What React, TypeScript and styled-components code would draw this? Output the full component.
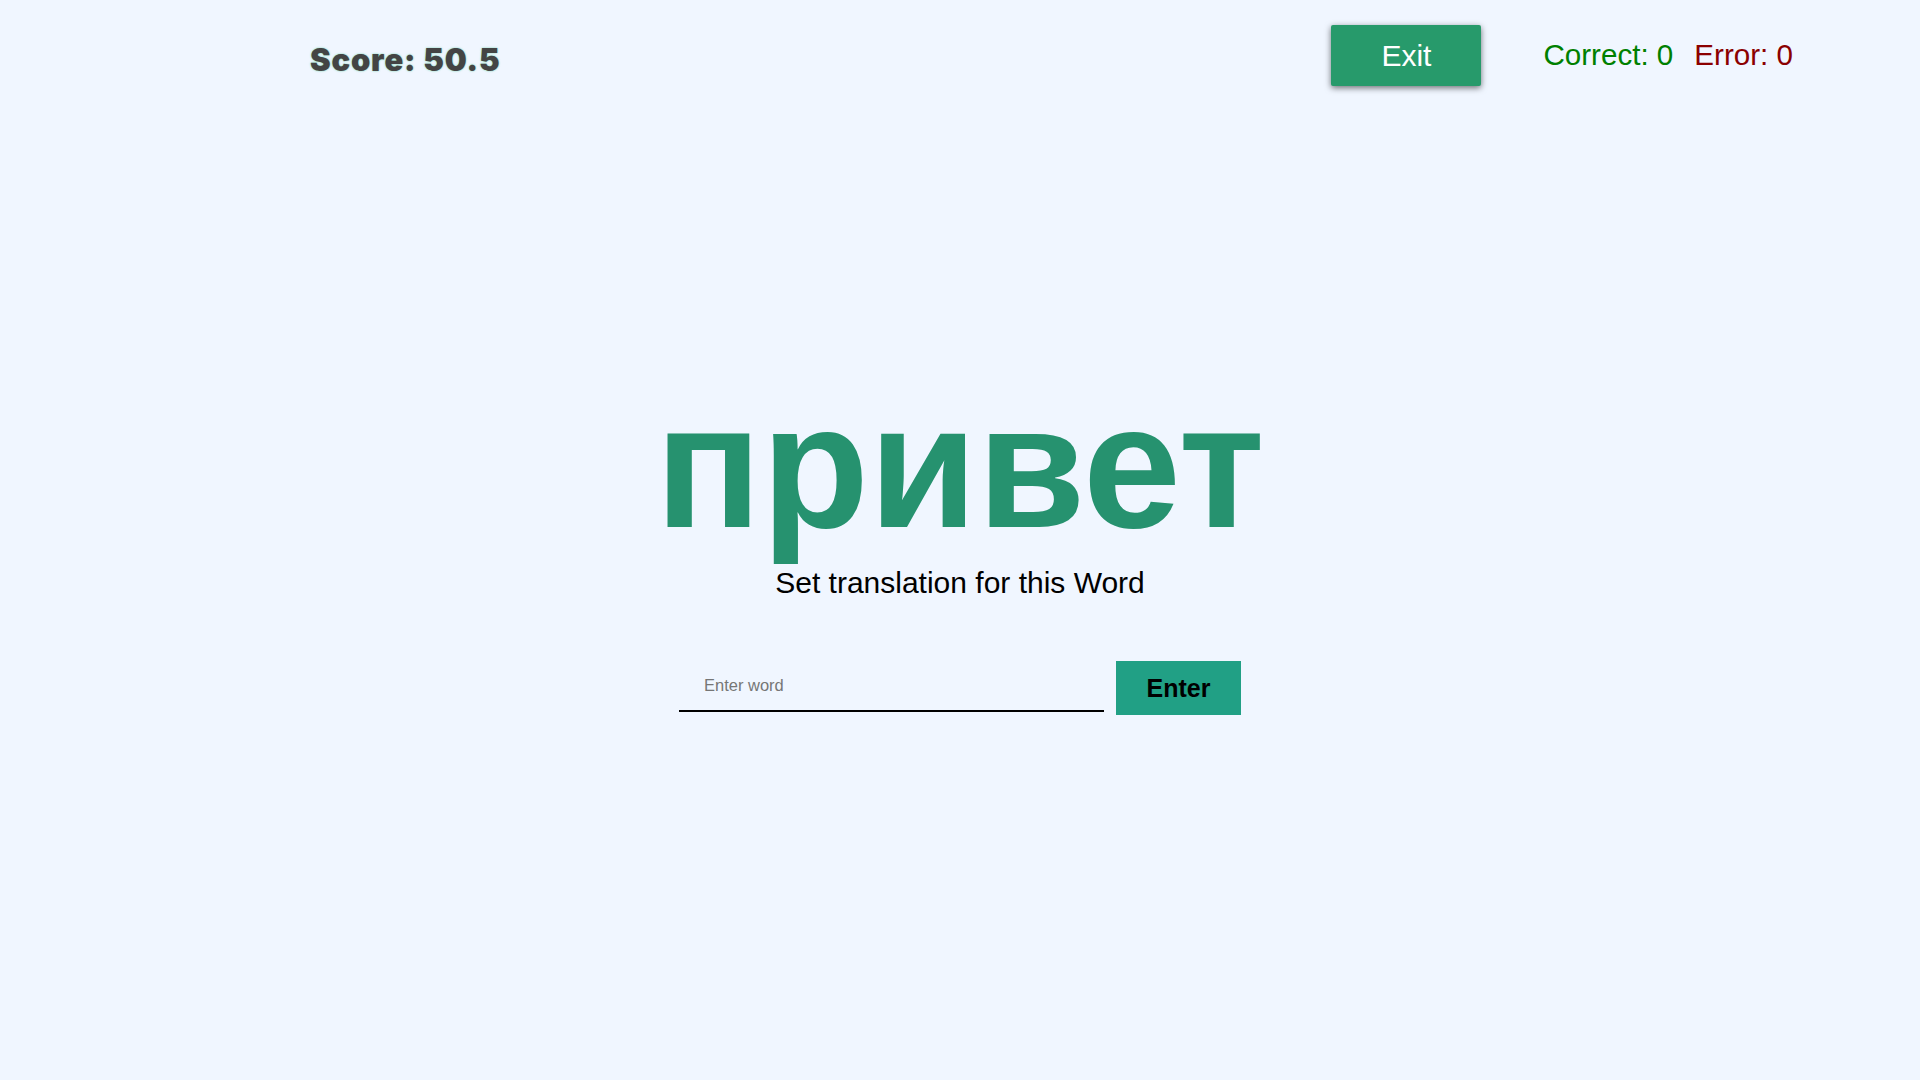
import { useState } from "react";
import styled, { createGlobalStyle } from "styled-components";

const GlobalStyle = createGlobalStyle`
  html, body {
    margin: 0;
    padding: 0;
    background: #f0f6ff;
    overflow-x: hidden;
  }
  body {
    font-family: "Liberation Sans", Arial, sans-serif;
  }
`;

const Page = styled.div`
  width: 100vw;
  min-height: 1285px;
  box-sizing: border-box;
`;

const Header = styled.header`
  display: flex;
  align-items: flex-start;
  padding: 25px 127px 0 310px;
`;

const Score = styled.h2`
  margin: 16px 0 0;
  font-family: "Arial Black", Inter, "Liberation Sans", sans-serif;
  font-weight: 900;
  font-size: 31px;
  letter-spacing: 0.8px;
  line-height: normal;
  color: #444;
  text-shadow: 0 0 2px rgba(70, 200, 150, 0.8);
`;

const ExitButton = styled.button`
  margin-left: auto;
  width: 150px;
  height: 61px;
  border: none;
  border-radius: 2px;
  background: #279a6b;
  color: #fff;
  font-family: "Liberation Sans", Arial, sans-serif;
  font-size: 30px;
  box-shadow: 0 2px 6px rgba(0, 0, 0, 0.55);
  cursor: pointer;
`;

const Stat = styled.span<{ $tone: "ok" | "bad"; $gap: number }>`
  margin: 13px 0 0 ${(p) => p.$gap}px;
  font-size: 29.6px;
  line-height: normal;
  color: ${(p) => (p.$tone === "ok" ? "#008000" : "#8b0000")};
`;

const Main = styled.main`
  display: flex;
  flex-direction: column;
  align-items: center;
  padding-top: 292px;
`;

const Word = styled.h1`
  margin: 0;
  font-size: 176px;
  font-weight: 700;
  line-height: 1;
  color: #26926f;
`;

const Hint = styled.p`
  margin: 12px 0 0;
  font-size: 30px;
  line-height: normal;
  color: #000;
`;

const AnswerRow = styled.form`
  display: flex;
  align-items: flex-start;
  gap: 12px;
  margin-top: 61px;
`;

const WordInput = styled.input`
  width: 425px;
  height: 51px;
  box-sizing: border-box;
  padding: 0 0 0 25px;
  border: none;
  border-bottom: 2px solid #000;
  background: transparent;
  font-family: "Liberation Sans", Arial, sans-serif;
  font-size: 16.5px;
  outline: none;
  &::placeholder {
    color: #767676;
  }
`;

const EnterButton = styled.button`
  width: 125px;
  height: 54px;
  border: none;
  background: #21a085;
  color: #000;
  font-family: "Liberation Sans", Arial, sans-serif;
  font-size: 25px;
  font-weight: 700;
  cursor: pointer;
`;

export default function App() {
  const [answer, setAnswer] = useState("");

  return (
    <>
      <GlobalStyle />
      <Page>
        <Header>
          <Score>Score: 50.5</Score>
          <ExitButton>Exit</ExitButton>
          <Stat $tone="ok" $gap={62}>Correct: 0</Stat>
          <Stat $tone="bad" $gap={21}>Error: 0</Stat>
        </Header>
        <Main>
          <Word>привет</Word>
          <Hint>Set translation for this Word</Hint>
          <AnswerRow onSubmit={(e) => e.preventDefault()}>
            <WordInput
              placeholder="Enter word"
              value={answer}
              onChange={(e) => setAnswer(e.target.value)}
            />
            <EnterButton type="submit">Enter</EnterButton>
          </AnswerRow>
        </Main>
      </Page>
    </>
  );
}
